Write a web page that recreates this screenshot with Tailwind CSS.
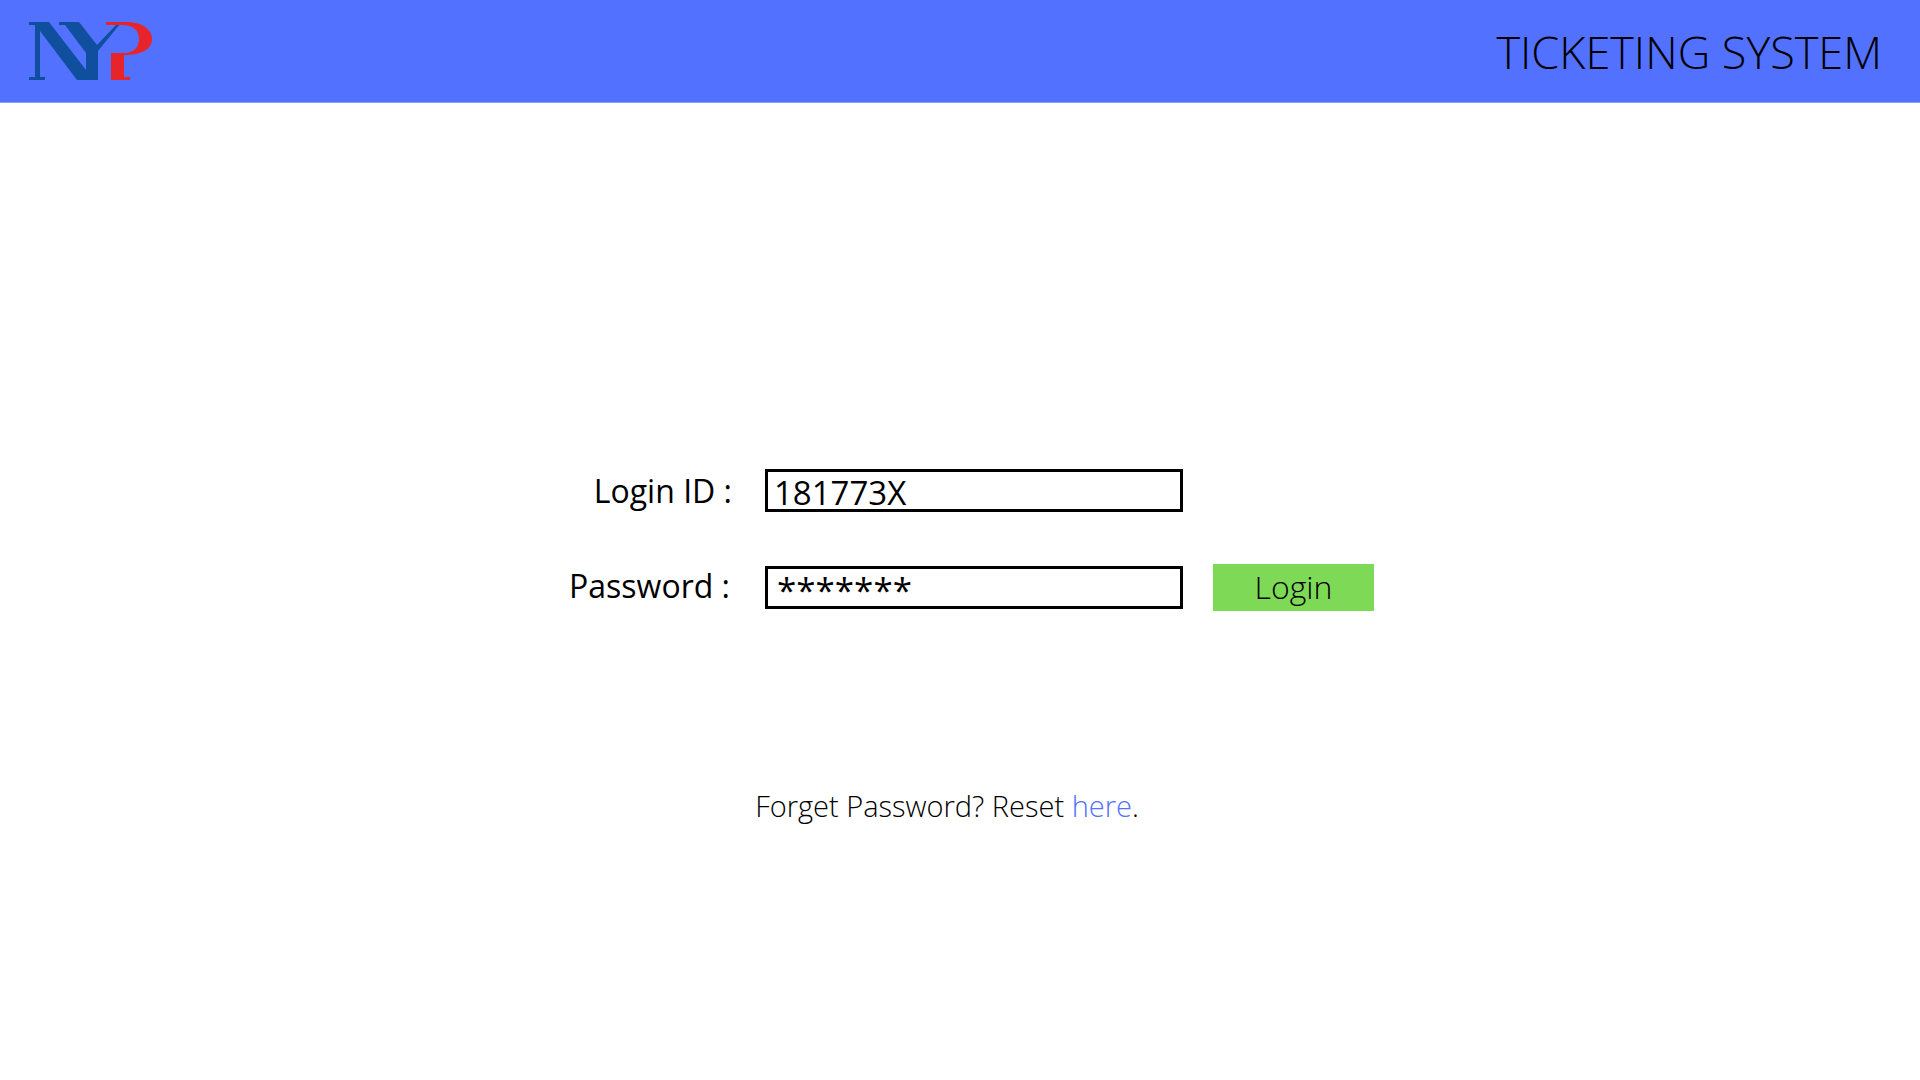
<!DOCTYPE html>
<html lang="en">
<head>
<meta charset="utf-8">
<meta name="viewport" content="width=device-width, initial-scale=1">
<title>Ticketing System</title>
<script src="https://cdn.jsdelivr.net/npm/@tailwindcss/browser@4"></script>
</head>
<body class="min-h-screen bg-white font-['Open_Sans',sans-serif] text-black">
  <header class="flex h-[103px] items-center justify-between border-b border-[#8b9fff] bg-[#5271ff] pr-[38px] pl-7">
    <svg class="h-[62px] w-[128px]" viewBox="28 20 128 62" role="img" aria-label="NYP">
      <g fill="#0f4f9e">
        <path d="M29 22H49L86 70V53L65 25H59V22H79L97 45L117 24H120L98 51V80H77L40 31V77H45V80H29V77H35V25H29Z"/>
      </g>
      <path fill="#e8242b" d="M106 22H126C142 22 152 29 152 39C152 49 142 55 124 55V77H130V80H111V53H126C134 52 139 47 139 39C139 30 133 25 122 25H106Z"/>
    </svg>
    <h1 class="text-[45px] leading-none font-light">TICKETING SYSTEM</h1>
  </header>
  <main class="flex flex-col items-center pt-[364px]">
    <form class="grid grid-cols-[170px_418px_161px] items-center gap-x-[30px] gap-y-[50px] pl-[19px] text-[32px]">
      <label for="login" class="pr-[3px] text-right leading-[47px] whitespace-nowrap">Login ID :</label>
      <input id="login" type="text" value="181773X" class="h-[43px] w-full border-3 border-black px-1.5 pt-1 text-[33px] leading-8">
      <span></span>
      <label for="password" class="pr-[5px] pb-1 text-right leading-[43px] whitespace-nowrap">Password :</label>
      <input id="password" type="text" value="*******" autocomplete="off" class="h-[43px] w-full border-3 border-black px-[9px] pt-1 text-[35px] leading-8">
      <button type="button" class="h-[47px] bg-[#7ed957] pb-0.5 leading-none font-light">Login</button>
    </form>
    <p class="mt-[175px] pr-[26px] text-[29px] leading-10 font-light">Forget Password? Reset <a href="#" class="text-[#5271ff]">here</a>.</p>
  </main>
</body>
</html>
